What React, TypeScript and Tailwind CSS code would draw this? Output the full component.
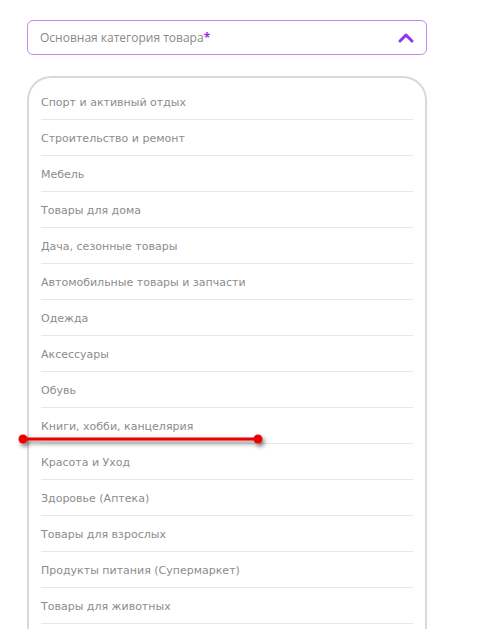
import { ChevronUp } from "lucide-react";

const categories = [
  "Спорт и активный отдых",
  "Строительство и ремонт",
  "Мебель",
  "Товары для дома",
  "Дача, сезонные товары",
  "Автомобильные товары и запчасти",
  "Одежда",
  "Аксессуары",
  "Обувь",
  "Книги, хобби, канцелярия",
  "Красота и Уход",
  "Здоровье (Аптека)",
  "Товары для взрослых",
  "Продукты питания (Супермаркет)",
  "Товары для животных",
];

export default function App() {
  return (
    <div className="relative h-[629px] w-[499px] overflow-hidden bg-white">
      <div className="ml-[27px] mt-5 w-[400px]">
        <button
          type="button"
          className="flex h-[35px] w-full items-center justify-between rounded-md border border-[#c58af0] pl-3 pr-2 text-left"
        >
          <span className="text-[12px] text-[#8a8a8a]" style={{ fontFamily: '"Open Sans", sans-serif' }}>
            Основная категория товара
            <span className="font-bold text-[#9b30e0]">*</span>
          </span>
          <ChevronUp className="h-6 w-6 text-[#9333ea]" strokeWidth={3} />
        </button>

        <div className="mt-[21px] h-[560px] rounded-t-[24px] border-2 border-b-0 border-[#d9d9d9] px-3 pt-[6px]">
          {categories.map((c) => (
            <div
              key={c}
              className="flex h-9 items-center border-b border-[#e8e8e8] pt-1 text-[11px] text-[#8c8c8c]"
              style={{ fontFamily: '"DejaVu Sans", Verdana, sans-serif' }}
            >
              {c}
            </div>
          ))}
        </div>
      </div>

      {/* annotation line */}
      <svg className="absolute left-0 top-0" width="499" height="629">
        <defs>
          <filter id="sh" x="-20%" y="-200%" width="140%" height="500%">
            <feDropShadow dx="2" dy="3" stdDeviation="2" floodColor="#000" floodOpacity="0.5" />
          </filter>
        </defs>
        <g filter="url(#sh)">
          <line x1="23" y1="439" x2="258" y2="439" stroke="#ee0000" strokeWidth="3" />
          <circle cx="23" cy="439" r="4.5" fill="#ee0000" />
          <circle cx="258" cy="439" r="4.5" fill="#ee0000" />
        </g>
      </svg>
    </div>
  );
}
